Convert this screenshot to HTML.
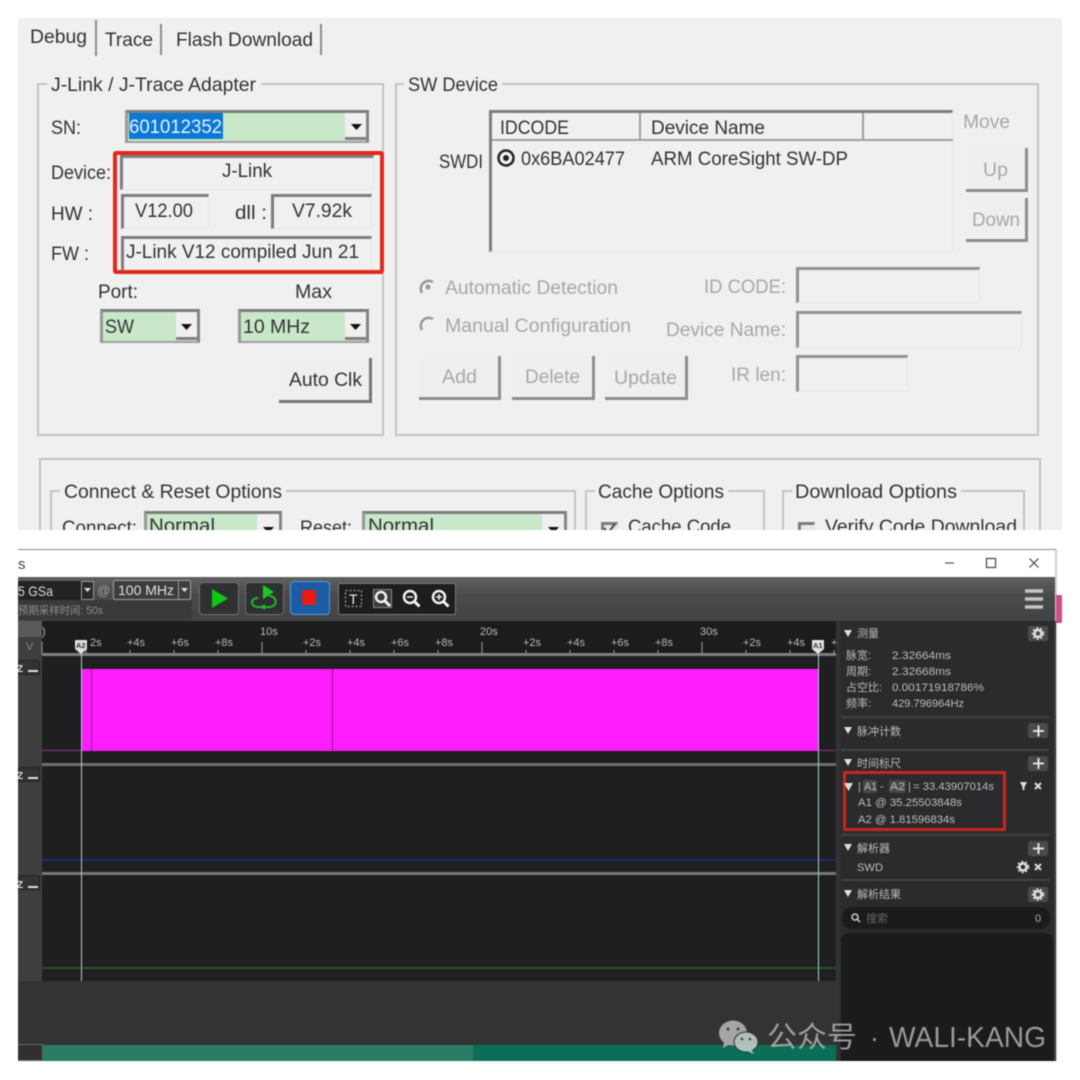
<!DOCTYPE html>
<html><head><meta charset="utf-8">
<style>
html,body{margin:0;padding:0;background:#fff}
#r{position:relative;width:1080px;height:1080px;overflow:hidden;background:#fff;filter:blur(.6px)}
#r div{position:absolute;box-sizing:border-box}
.g{border:2px solid #c2c5c5}
.s{border-top:3px solid #7d7d7d;border-left:3px solid #7d7d7d;border-right:1px solid #e6e6e6;border-bottom:1px solid #e6e6e6}
.c{border-top:3px solid #7d7d7d;border-left:3px solid #989898;border-right:3px solid #858585;border-bottom:2px solid #a0a0a0;background:#c8e8c9}
.a{background:#f0f0f0;border-bottom:3px solid #808080}
.b{background:#efefef;border-right:3px solid #777;border-bottom:3px solid #777}
.bd{background:#efefef;border-right:3px solid #8e8e8e;border-bottom:3px solid #8e8e8e}
svg{position:absolute;left:0;top:0}
text{font-family:"Liberation Sans","Noto Sans CJK SC",sans-serif;white-space:pre}
.k{font-size:19px;fill:#333}
.d{font-size:19px;fill:#a8a8a8}
.m{font-size:11px;fill:#b9b9b9}
.p{font-size:11px;fill:#bdbdbd}
</style></head><body>
<div id="r">
<!-- top window -->
<div style="left:18px;top:18px;width:1044px;height:512px;background:#f0f0f0"></div>
<div style="left:95px;top:20px;width:2px;height:36px;background:#8b8b8b"></div>
<div style="left:160px;top:24px;width:2px;height:31px;background:#8b8b8b"></div>
<div style="left:320px;top:24px;width:2px;height:31px;background:#8b8b8b"></div>
<div class="g" style="left:37px;top:83px;width:347px;height:353px"></div>
<div style="left:47px;top:74px;width:214px;height:20px;background:#f0f0f0"></div>
<div class="g" style="left:395px;top:83px;width:644px;height:353px"></div>
<div style="left:404px;top:74px;width:98px;height:20px;background:#f0f0f0"></div>
<div class="c" style="left:125px;top:110px;width:244px;height:33px"></div>
<div style="left:129px;top:113px;width:94px;height:26px;background:#0a78d4"></div>
<div class="a" style="left:345px;top:113px;width:21px;height:27px"></div>
<div class="s" style="left:120px;top:155px;width:254px;height:35px"></div>
<div class="s" style="left:121px;top:194px;width:88px;height:35px"></div>
<div class="s" style="left:271px;top:194px;width:101px;height:35px"></div>
<div class="s" style="left:121px;top:236px;width:251px;height:35px"></div>
<div style="left:113px;top:151px;width:271px;height:123px;border:4px solid #e2281f;border-radius:3px"></div>
<div class="c" style="left:100px;top:309px;width:100px;height:34px"></div>
<div class="a" style="left:176px;top:312px;width:21px;height:28px"></div>
<div class="c" style="left:238px;top:309px;width:131px;height:34px"></div>
<div class="a" style="left:345px;top:312px;width:21px;height:28px"></div>
<div class="b" style="left:279px;top:358px;width:93px;height:45px"></div>
<!-- SW device -->
<div class="s" style="left:489px;top:110px;width:464px;height:142px"></div>
<div style="left:492px;top:139px;width:148px;height:2px;background:#a0a0a0"></div>
<div style="left:641px;top:139px;width:222px;height:2px;background:#a0a0a0"></div>
<div style="left:864px;top:139px;width:89px;height:2px;background:#a0a0a0"></div>
<div style="left:639px;top:113px;width:2px;height:28px;background:#a0a0a0"></div>
<div style="left:862px;top:113px;width:2px;height:28px;background:#a0a0a0"></div>
<div class="bd" style="left:966px;top:148px;width:62px;height:44px"></div>
<div class="bd" style="left:966px;top:198px;width:62px;height:44px"></div>
<div class="s" style="left:796px;top:267px;width:184px;height:36px;border-top-color:#929292;border-left-color:#929292"></div>
<div class="s" style="left:796px;top:311px;width:226px;height:37px;border-top-color:#929292;border-left-color:#929292"></div>
<div class="s" style="left:796px;top:355px;width:112px;height:37px;border-top-color:#929292;border-left-color:#929292"></div>
<div class="bd" style="left:419px;top:356px;width:82px;height:44px"></div>
<div class="bd" style="left:512px;top:356px;width:83px;height:44px"></div>
<div class="bd" style="left:605px;top:356px;width:83px;height:44px"></div>
<!-- bottom options -->
<div class="g" style="left:39px;top:458px;width:1002px;height:90px"></div>
<div class="g" style="left:50px;top:490px;width:526px;height:60px"></div>
<div style="left:60px;top:480px;width:226px;height:22px;background:#f0f0f0"></div>
<div class="g" style="left:585px;top:490px;width:180px;height:60px"></div>
<div style="left:595px;top:480px;width:133px;height:22px;background:#f0f0f0"></div>
<div class="g" style="left:782px;top:490px;width:243px;height:60px"></div>
<div style="left:792px;top:480px;width:169px;height:22px;background:#f0f0f0"></div>
<div class="c" style="left:144px;top:511px;width:138px;height:34px"></div>
<div class="a" style="left:257px;top:514px;width:22px;height:28px"></div>
<div class="c" style="left:362px;top:511px;width:205px;height:34px"></div>
<div class="a" style="left:542px;top:514px;width:22px;height:28px"></div>
<div class="s" style="left:601px;top:522px;width:17px;height:17px;background:#dfe8df"></div>
<div class="s" style="left:798px;top:522px;width:17px;height:17px;background:#e4e8e4"></div>
<div style="left:0;top:530px;width:1080px;height:200px;background:#fff"></div>

<!-- bottom window -->
<div style="left:18px;top:549px;width:1038px;height:513px;background:#fff;border-top:1px solid #8a8a8a"></div>
<div style="left:1055px;top:550px;width:2px;height:511px;background:#d0d0d0"></div>
<div style="left:1056px;top:595px;width:6px;height:28px;background:#cf4c86"></div>
<div style="left:18px;top:577px;width:1037px;height:44px;background:linear-gradient(#606163,#4a4b4d 40%,#424345)"></div>
<div style="left:18px;top:600px;width:174px;height:20px;background:#393a3c"></div>
<div style="left:18px;top:581px;width:64px;height:19px;background:#232325"></div>
<div style="left:81px;top:581px;width:13px;height:19px;background:#2a2a2c;border:1px solid #999"></div>
<div style="left:113px;top:580px;width:78px;height:20px;background:#3c3d3f;border:1px solid #a2a2a2;border-radius:2px"></div>
<div style="left:178px;top:581px;width:1px;height:18px;background:#999"></div>
<div style="left:199px;top:582px;width:40px;height:33px;background:#2f3032;border:1px solid #707070;border-radius:4px"></div>
<div style="left:245px;top:582px;width:39px;height:33px;background:#2f3032;border:1px solid #707070;border-radius:4px"></div>
<div style="left:290px;top:581px;width:40px;height:34px;background:#1a5ca6;border:1px solid #5c9ad0;border-radius:4px"></div>
<div style="left:338px;top:583px;width:118px;height:32px;background:#1d1d1f;border:1px solid #7a7a7a;border-radius:2px"></div>
<!-- main dark -->
<div style="left:18px;top:621px;width:1037px;height:440px;background:#2d2d2f"></div>
<div style="left:18px;top:621px;width:24px;height:360px;background:#3e3e3f"></div>
<div style="left:18px;top:621px;width:24px;height:16px;background:#5a5a5b"></div>
<div style="left:18px;top:637px;width:24px;height:17px;background:#3f3f40"></div>
<div style="left:42px;top:621px;width:794px;height:33px;background:#1c1c1e"></div>
<div style="left:42px;top:655px;width:794px;height:326px;background:#1f1f22"></div>
<div style="left:42px;top:653px;width:794px;height:3px;background:#7f7f7f"></div>
<div style="left:81px;top:669px;width:737px;height:82px;background:#ff1cff"></div>
<div style="left:91px;top:669px;width:1px;height:82px;background:#9a1c9a"></div>
<div style="left:332px;top:669px;width:1px;height:82px;background:#8a1a8a"></div>
<div style="left:42px;top:750px;width:39px;height:1px;background:#8c2f8c"></div>
<div style="left:818px;top:750px;width:18px;height:1px;background:#8c2f8c"></div>
<div style="left:42px;top:763px;width:794px;height:3px;background:#6f6f6f"></div>
<div style="left:42px;top:859px;width:794px;height:2px;background:#1f2b6b"></div>
<div style="left:42px;top:872px;width:794px;height:3px;background:#777"></div>
<div style="left:42px;top:967px;width:794px;height:2px;background:#24502a"></div>
<div style="left:18px;top:660px;width:22px;height:15px;background:#333;border:1px solid #222;border-radius:2px"></div>
<div style="left:18px;top:767px;width:22px;height:15px;background:#333;border:1px solid #222;border-radius:2px"></div>
<div style="left:18px;top:875px;width:22px;height:15px;background:#333;border:1px solid #222;border-radius:2px"></div>
<div style="left:81px;top:650px;width:1px;height:332px;background:#a9cfcf"></div>
<div style="left:818px;top:650px;width:1px;height:332px;background:#a9cfcf"></div>
<div style="left:18px;top:981px;width:818px;height:64px;background:#333334"></div>
<div style="left:18px;top:1044px;width:25px;height:17px;background:#303031;border:1px solid #5d6b60;border-left:0"></div>
<div style="left:43px;top:1045px;width:430px;height:16px;background:#2a7c66"></div>
<div style="left:473px;top:1045px;width:363px;height:16px;background:#0c6e57"></div>
<!-- right panel -->
<div style="left:836px;top:621px;width:4px;height:440px;background:#333"></div>
<div style="left:840px;top:621px;width:214px;height:440px;background:#2b2b2d"></div>
<div style="left:841px;top:933px;width:212px;height:128px;background:#1b1b1d;border-radius:8px 8px 0 0"></div>
<div style="left:1054px;top:621px;width:2px;height:440px;background:#3a3a3c"></div>
<div style="left:841px;top:716px;width:208px;height:2px;background:#434345"></div>
<div style="left:841px;top:749px;width:208px;height:2px;background:#434345"></div>
<div style="left:841px;top:834px;width:208px;height:2px;background:#434345"></div>
<div style="left:841px;top:879px;width:208px;height:2px;background:#434345"></div>
<div style="left:1028px;top:626px;width:20px;height:15px;background:#4a4a4c;border-radius:2px"></div>
<div style="left:1028px;top:723px;width:20px;height:15px;background:#4a4a4c;border-radius:2px"></div>
<div style="left:1028px;top:756px;width:20px;height:15px;background:#4a4a4c;border-radius:2px"></div>
<div style="left:1028px;top:841px;width:20px;height:15px;background:#4a4a4c;border-radius:2px"></div>
<div style="left:1028px;top:887px;width:20px;height:15px;background:#4a4a4c;border-radius:2px"></div>
<div style="left:842px;top:907px;width:208px;height:22px;background:#1b1b1d;border-radius:10px"></div>
<div style="left:863px;top:780px;width:14px;height:13px;background:#48484a;border-radius:2px"></div>
<div style="left:889px;top:780px;width:17px;height:13px;background:#48484a;border-radius:2px"></div>
<div style="left:843px;top:771px;width:163px;height:60px;border:3px solid #c8261e;border-radius:2px"></div>

<svg width="1080" height="1080" viewBox="0 0 1080 1080">
<!-- tabs and labels -->
<text class="k" x="30" y="43" textLength="57" lengthAdjust="spacingAndGlyphs">Debug</text>
<text class="k" x="105" y="46" textLength="48" lengthAdjust="spacingAndGlyphs">Trace</text>
<text class="k" x="176" y="46" textLength="137" lengthAdjust="spacingAndGlyphs">Flash Download</text>
<text class="k" x="51" y="91" textLength="205" lengthAdjust="spacingAndGlyphs">J-Link / J-Trace Adapter</text>
<text class="k" x="408" y="91" textLength="90" lengthAdjust="spacingAndGlyphs">SW Device</text>
<text class="k" x="51" y="134" textLength="30" lengthAdjust="spacingAndGlyphs">SN:</text>
<text x="129" y="133" font-size="19" fill="#e8f2fb" textLength="93" lengthAdjust="spacingAndGlyphs">601012352</text>
<text class="k" x="51" y="179" textLength="60" lengthAdjust="spacingAndGlyphs">Device:</text>
<text class="k" x="222" y="177" textLength="50" lengthAdjust="spacingAndGlyphs">J-Link</text>
<text class="k" x="51" y="220" textLength="42" lengthAdjust="spacingAndGlyphs">HW :</text>
<text class="k" x="135" y="217" textLength="58" lengthAdjust="spacingAndGlyphs">V12.00</text>
<text class="k" x="235" y="219" textLength="32" lengthAdjust="spacingAndGlyphs">dll :</text>
<text class="k" x="292" y="217" textLength="60" lengthAdjust="spacingAndGlyphs">V7.92k</text>
<text class="k" x="51" y="260" textLength="38" lengthAdjust="spacingAndGlyphs">FW :</text>
<text class="k" x="126" y="258" textLength="233" lengthAdjust="spacingAndGlyphs">J-Link V12 compiled Jun 21</text>
<text class="k" x="98" y="298" textLength="40" lengthAdjust="spacingAndGlyphs">Port:</text>
<text class="k" x="295" y="298" textLength="37" lengthAdjust="spacingAndGlyphs">Max</text>
<text class="k" x="105" y="333" textLength="29" lengthAdjust="spacingAndGlyphs">SW</text>
<text class="k" x="243" y="333" textLength="67" lengthAdjust="spacingAndGlyphs">10 MHz</text>
<text class="k" x="289" y="386" textLength="73" lengthAdjust="spacingAndGlyphs">Auto Clk</text>
<path d="M351 124h11l-5.500 6zM181 324h11l-5.500 6zM350 324h11l-5.500 6z" fill="#111"/>
<!-- SW device text -->
<text class="k" x="439" y="168" textLength="44" lengthAdjust="spacingAndGlyphs">SWDI</text>
<text class="k" x="500" y="134" textLength="69" lengthAdjust="spacingAndGlyphs">IDCODE</text>
<text class="k" x="651" y="134" textLength="114" lengthAdjust="spacingAndGlyphs">Device Name</text>
<circle cx="506" cy="158" r="7.500" fill="none" stroke="#222" stroke-width="2.500"/><circle cx="506" cy="158" r="3" fill="#222"/>
<text class="k" x="521" y="165" textLength="104" lengthAdjust="spacingAndGlyphs">0x6BA02477</text>
<text class="k" x="651" y="165" textLength="197" lengthAdjust="spacingAndGlyphs">ARM CoreSight SW-DP</text>
<text class="d" x="963" y="128" textLength="47" lengthAdjust="spacingAndGlyphs">Move</text>
<text class="d" x="983" y="176" textLength="25" lengthAdjust="spacingAndGlyphs">Up</text>
<text class="d" x="972" y="226" textLength="48" lengthAdjust="spacingAndGlyphs">Down</text>
<path d="M433 282a8 8 0 0 0-11 11" fill="none" stroke="#999" stroke-width="2.500"/><circle cx="428" cy="287" r="2.500" fill="#999"/>
<path d="M433 319a8 8 0 0 0-11 11" fill="none" stroke="#999" stroke-width="2.500"/>
<text class="d" x="445" y="294" textLength="173" lengthAdjust="spacingAndGlyphs">Automatic Detection</text>
<text class="d" x="445" y="332" textLength="186" lengthAdjust="spacingAndGlyphs">Manual Configuration</text>
<text class="d" x="704" y="293" textLength="82" lengthAdjust="spacingAndGlyphs">ID CODE:</text>
<text class="d" x="666" y="336" textLength="120" lengthAdjust="spacingAndGlyphs">Device Name:</text>
<text class="d" x="731" y="381" textLength="55" lengthAdjust="spacingAndGlyphs">IR len:</text>
<text class="d" x="442" y="383" textLength="35" lengthAdjust="spacingAndGlyphs">Add</text>
<text class="d" x="525" y="383" textLength="55" lengthAdjust="spacingAndGlyphs">Delete</text>
<text class="d" x="614" y="384" textLength="63" lengthAdjust="spacingAndGlyphs">Update</text>
<!-- options -->
<text class="k" x="64" y="498" textLength="218" lengthAdjust="spacingAndGlyphs">Connect &amp; Reset Options</text>
<text class="k" x="598" y="498" textLength="126" lengthAdjust="spacingAndGlyphs">Cache Options</text>
<text class="k" x="795" y="498" textLength="162" lengthAdjust="spacingAndGlyphs">Download Options</text>
<svg x="0" y="0" width="1080" height="530">
<text class="k" x="62" y="534" textLength="75" lengthAdjust="spacingAndGlyphs">Connect:</text>
<text class="k" x="149" y="532" textLength="66" lengthAdjust="spacingAndGlyphs">Normal</text>
<text class="k" x="300" y="534" textLength="52" lengthAdjust="spacingAndGlyphs">Reset:</text>
<text class="k" x="368" y="532" textLength="66" lengthAdjust="spacingAndGlyphs">Normal</text>
<text class="k" x="628" y="533" textLength="103" lengthAdjust="spacingAndGlyphs">Cache Code</text>
<text class="k" x="825" y="533" textLength="192" lengthAdjust="spacingAndGlyphs">Verify Code Download</text>
<path d="M604 528l4 5 7-9" fill="none" stroke="#4a4a4a" stroke-width="2"/>
<path d="M263 527h11l-5.500 6zM548 527h11l-5.500 6z" fill="#111"/>
</svg>
<!-- window title -->
<text x="18" y="569" font-size="15" fill="#444">s</text>
<path d="M945 563h9" stroke="#555" stroke-width="1.200"/>
<rect x="986.500" y="558.500" width="9" height="9" fill="none" stroke="#444" stroke-width="1.200"/>
<path d="M1029.500 558.500l9 9M1038.500 558.500l-9 9" stroke="#444" stroke-width="1.200"/>
<!-- toolbar -->
<text x="18" y="596" font-size="14" fill="#dcdcdc" textLength="35" lengthAdjust="spacingAndGlyphs">5 GSa</text>
<path d="M84 588h7l-3.500 4z" fill="#ddd"/>
<text x="97" y="595" font-size="13" fill="#a0a0a0">@</text>
<text x="118" y="595" font-size="14" fill="#e0e0e0" textLength="56" lengthAdjust="spacingAndGlyphs">100 MHz</text>
<path d="M181 588h7l-3.500 4z" fill="#ddd"/>
<text x="18" y="614" font-size="11" fill="#8e8e8e" textLength="85" lengthAdjust="spacingAndGlyphs">预期采样时间: 50s</text>
<path d="M212 589v19l16-9.500z" fill="#0fc712"/>
<path d="M258 598c-8 0-8 9 0 9h11c9 0 9-11 0-11" fill="none" stroke="#24b22b" stroke-width="2"/><path d="M263 585v14l11-7z" fill="#1fc925"/><path d="M265 604l-5 3 5 3z" fill="#24b22b"/>
<rect x="302" y="590" width="14" height="15" fill="#ea1b10"/>
<rect x="345.500" y="590.500" width="16" height="16" fill="none" stroke="#bbb" stroke-dasharray="2 2"/>
<text x="349" y="604" font-size="14" fill="#eee">T</text>
<rect x="373.500" y="589.500" width="18" height="18" fill="#3a3a3a" stroke="#888"/>
<circle cx="381" cy="597" r="5" fill="none" stroke="#f2f2f2" stroke-width="2.500"/><path d="M385 601l5 5" stroke="#f2f2f2" stroke-width="3"/>
<circle cx="410" cy="597" r="6" fill="none" stroke="#f2f2f2" stroke-width="2.500"/><path d="M414.500 601.500l5 5" stroke="#f2f2f2" stroke-width="3"/><path d="M407 597h6" stroke="#f2f2f2" stroke-width="1.500"/>
<circle cx="439" cy="597" r="6" fill="none" stroke="#f2f2f2" stroke-width="2.500"/><path d="M443.500 601.500l5 5" stroke="#f2f2f2" stroke-width="3"/><path d="M436 597h6M439 594v6" stroke="#f2f2f2" stroke-width="1.500"/>
<path d="M1025 591h18M1025 599h18M1025 607h18" stroke="#c5c5c5" stroke-width="3.500"/>
<!-- timeline -->
<text class="m" x="42" y="635">)</text>
<text x="26" y="650" font-size="11" fill="#8a8a8a">V</text>
<path d="M86 650v4M130 650v4M174 650v4M218 650v4M306 650v4M350 650v4M394 650v4M438 650v4M526 650v4M570 650v4M614 650v4M658 650v4M746 650v4M790 650v4M834 650v4M262 642v12M482 642v12M702 642v12M42 642v12" stroke="#999" stroke-width="1"/>
<text class="m" x="260" y="635">10s</text><text class="m" x="480" y="635">20s</text><text class="m" x="700" y="635">30s</text>
<text class="m" x="90" y="646">2s</text>
<text class="m" x="127" y="646">+4s</text><text class="m" x="171" y="646">+6s</text><text class="m" x="215" y="646">+8s</text>
<text class="m" x="303" y="646">+2s</text><text class="m" x="347" y="646">+4s</text><text class="m" x="391" y="646">+6s</text><text class="m" x="435" y="646">+8s</text>
<text class="m" x="523" y="646">+2s</text><text class="m" x="567" y="646">+4s</text><text class="m" x="611" y="646">+6s</text><text class="m" x="655" y="646">+8s</text>
<text class="m" x="743" y="646">+2s</text><text class="m" x="787" y="646">+4s</text><text class="m" x="831" y="646">+</text>
<path d="M75 640h12v9l-6 5-6-5z" fill="#e0e0e0"/><text x="76" y="648" font-size="7.500" font-weight="bold" fill="#333">A2</text>
<path d="M812 640h12v9l-6 5-6-5z" fill="#e0e0e0"/><text x="813" y="648" font-size="7.500" font-weight="bold" fill="#333">A1</text>
<path d="M28 671h10M28 778h10M28 887h10" stroke="#ddd" stroke-width="2"/>
<text x="17" y="672" font-size="10" font-weight="bold" fill="#ddd">Z</text>
<text x="17" y="779" font-size="10" font-weight="bold" fill="#ddd">Z</text>
<text x="17" y="888" font-size="10" font-weight="bold" fill="#ddd">Z</text>
<!-- right panel text -->
<path d="M844 630h8l-4 7zM844 727h8l-4 7zM844 759h8l-4 7zM844 844h8l-4 7zM844 890h8l-4 7z" fill="#ddd"/>
<path d="M844 783h9l-4.500 8z" fill="#ddd"/>
<text class="p" x="857" y="637">测量</text>
<text class="p" x="857" y="735">脉冲计数</text>
<text class="p" x="857" y="767">时间标尺</text>
<text class="p" x="857" y="852">解析器</text>
<text class="p" x="857" y="898">解析结果</text>
<text class="p" x="846" y="659">脉宽:</text><text class="p" x="892" y="659" textLength="59" lengthAdjust="spacingAndGlyphs">2.32664ms</text>
<text class="p" x="846" y="675">周期:</text><text class="p" x="892" y="675" textLength="59" lengthAdjust="spacingAndGlyphs">2.32668ms</text>
<text class="p" x="846" y="691">占空比:</text><text class="p" x="892" y="691" textLength="92" lengthAdjust="spacingAndGlyphs">0.00171918786%</text>
<text class="p" x="846" y="707">频率:</text><text class="p" x="892" y="707" textLength="72" lengthAdjust="spacingAndGlyphs">429.796964Hz</text>
<text class="p" x="858" y="790">|</text><text class="p" x="864" y="790" textLength="13" lengthAdjust="spacingAndGlyphs">A1</text><text class="p" x="880" y="790">-</text><text class="p" x="890" y="790" textLength="15" lengthAdjust="spacingAndGlyphs">A2</text><text class="p" x="908" y="790">|</text>
<text class="p" x="913" y="790" textLength="81" lengthAdjust="spacingAndGlyphs">= 33.43907014s</text>
<text class="p" x="858" y="806" textLength="104" lengthAdjust="spacingAndGlyphs">A1 @ 35.25503848s</text>
<text class="p" x="858" y="823" textLength="97" lengthAdjust="spacingAndGlyphs">A2 @ 1.81596834s</text>
<text class="p" x="857" y="871" textLength="26" lengthAdjust="spacingAndGlyphs">SWD</text>
<path d="M1020 782h7l-2.500 5v3h-2v-3z" fill="#ddd"/>
<path d="M1035 783l6 6M1041 783l-6 6M1035 864l6 6M1041 864l-6 6" stroke="#ddd" stroke-width="2"/>
<path d="M1033 731h11M1038.500 725.500v11M1033 763.500h11M1038.500 758v11M1033 848.500h11M1038.500 843v11" stroke="#e0e0e0" stroke-width="2"/>
<g fill="none" stroke="#e0e0e0"><circle cx="1038" cy="633.500" r="3.500" stroke-width="2.500"/><circle cx="1038" cy="894.500" r="3.500" stroke-width="2.500"/><circle cx="1023" cy="867" r="3.500" stroke-width="2.500"/><circle cx="1038" cy="633.500" r="5.500" stroke-width="1.500" stroke-dasharray="2 2"/><circle cx="1038" cy="894.500" r="5.500" stroke-width="1.500" stroke-dasharray="2 2"/><circle cx="1023" cy="867" r="5.500" stroke-width="1.500" stroke-dasharray="2 2"/></g>
<circle cx="855" cy="917" r="3" fill="none" stroke="#ccc" stroke-width="1.500"/><path d="M857 919l3 3" stroke="#ccc" stroke-width="1.500"/>
<text x="866" y="922" font-size="11" fill="#666">搜索</text>
<text x="1035" y="922" font-size="11" fill="#aaa">0</text>
<!-- watermark -->
<g opacity=".85">
<ellipse cx="733" cy="1033" rx="14" ry="12.500" fill="#b9b9b9"/><path d="M724 1042l-1 6 7-4z" fill="#b9b9b9"/>
<ellipse cx="746" cy="1042" rx="12" ry="10" fill="#c8d5d0" stroke="#333" stroke-width="1"/><path d="M751 1049l3 5-7-3z" fill="#c8d5d0"/>
<circle cx="728" cy="1029" r="1.500" fill="#444"/><circle cx="738" cy="1029" r="1.500" fill="#444"/><circle cx="742" cy="1039" r="1.300" fill="#444"/><circle cx="750" cy="1039" r="1.300" fill="#444"/>
</g>
<text x="767" y="1047" font-size="29" fill="#b9b9b9" fill-opacity=".8" textLength="90" lengthAdjust="spacingAndGlyphs">公众号</text>
<text x="870" y="1047" font-size="27" fill="#b9b9b9" fill-opacity=".8">·</text>
<text x="889" y="1047" font-size="29" fill="#b9b9b9" fill-opacity=".8" textLength="157" lengthAdjust="spacingAndGlyphs">WALI-KANG</text>
</svg>
</div>
</body></html>
